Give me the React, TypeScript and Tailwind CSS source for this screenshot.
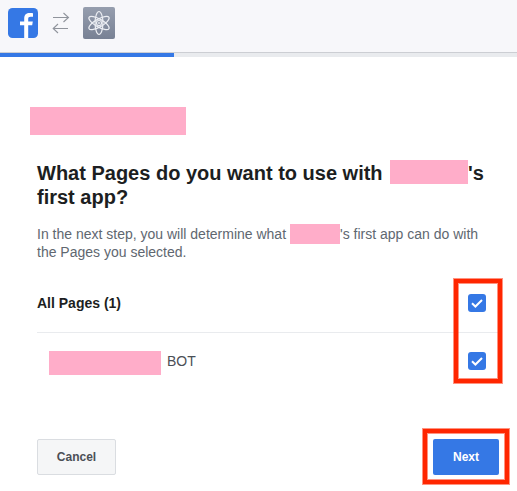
import React from "react";

function FacebookLogo() {
  return (
    <svg width="30" height="30" viewBox="0 0 30 30" className="block">
      <rect width="30" height="30" rx="4.5" fill="#3578e5" />
      <path
        fill="#fff"
        d="M16.200 30V17.300H12V13.500h4.200V10.500c0-3.800 2.200-5.500 5.600-5.500 1.300 0 2.500.1 3.200.2v3.600h-2.300c-1.900 0-2.500.8-2.500 2.300v2.400h4.600l-.6 3.800h-4V30z"
      />
    </svg>
  );
}

function Arrows() {
  return (
    <svg width="18" height="22" viewBox="0 0 18 22" fill="none" stroke="#90949c" strokeWidth="1.100" className="block">
      <path d="M1 5.500h15.400M11.500 1l5 4.500-5 4.500M16 16.500H1.500M6 12l-4.800 4.500L6 21" />
    </svg>
  );
}

function AtomIcon() {
  return (
    <svg width="32" height="32" viewBox="0 0 32 32" className="block">
      <defs>
        <linearGradient id="atomBg" x1="0" y1="0" x2="0" y2="1">
          <stop offset="0" stopColor="#969eae" />
          <stop offset="1" stopColor="#788194" />
        </linearGradient>
      </defs>
      <rect width="32" height="32" rx="2" fill="url(#atomBg)" />
      <g fill="none" stroke="#eceef3" strokeWidth="1.200">
        <ellipse cx="16" cy="16" rx="3.900" ry="11.500" />
        <ellipse cx="16" cy="16" rx="3.900" ry="11.500" transform="rotate(60 16 16)" />
        <ellipse cx="16" cy="16" rx="3.900" ry="11.500" transform="rotate(-60 16 16)" />
      </g>
      <circle cx="16" cy="16" r="2.500" fill="#8a92a3" stroke="#eceef3" strokeWidth="1.200" />
      <circle cx="16" cy="16" r="0.900" fill="#eceef3" />
    </svg>
  );
}

function Checkbox({ label }: { label: string }) {
  return (
    <span role="checkbox" aria-checked="true" aria-label={label} className="block size-[18px] rounded-[3px] bg-[#3578e5]">
      <svg width="18" height="18" viewBox="0 0 18 18" fill="none" stroke="#fff" strokeWidth="2" className="block">
        <path d="M4 9.300l3.400 3.200L14 6" />
      </svg>
    </span>
  );
}

export default function App() {
  return (
    <div className="flex h-[491px] w-[517px] flex-col overflow-hidden bg-white font-['Liberation_Sans',Arial,sans-serif] text-[#1c1e21]">
      <header className="flex h-[53px] shrink-0 items-start border-b border-[#ccced3] bg-[#f7f7fa] pl-2">
        <div className="pt-2"><FacebookLogo /></div>
        <div className="pt-3 pl-[14px]"><Arrows /></div>
        <div className="pt-[7px] pl-[13px]"><AtomIcon /></div>
      </header>
      <div className="h-1 shrink-0 bg-[#e9ebee]">
        <div className="h-full w-[174px] bg-[#3578e5]" />
      </div>

      <main className="flex flex-col pl-[37px]">
        <div className="mt-[50px] -ml-[7px] h-7 w-[156px] bg-[#ffadc9]" />
        <h1 className="mt-[26px] text-[20px] leading-6 font-bold whitespace-nowrap">
          <span className="flex h-6">
            <span className="w-[353px]">What Pages do you want to use with</span>
            <span className="-mt-px h-6 w-[78px] bg-[#ffadc9]" />
            <span>'s</span>
          </span>
          <span className="block">first app?</span>
        </h1>
        <p className="mt-4 text-[14px] leading-[18px] whitespace-nowrap text-[#606770]">
          <span className="flex h-[18px]">
            <span className="w-[253px]">In the next step, you will determine what</span>
            <span className="-mt-px h-5 w-[50px] bg-[#ffadc9]" />
            <span>'s first app can do with</span>
          </span>
          <span className="block">the Pages you selected.</span>
        </p>

        <div className="relative mt-[17px] w-[462px]">
          <div className="flex h-[55px] items-start justify-between border-b border-[#e9ebee] pt-4 pr-[13px]">
            <span className="text-[14px] leading-[18px] font-bold">All Pages (1)</span>
            <Checkbox label="All Pages" />
          </div>
          <div className="flex h-[57px] items-start pt-[18px] pr-[13px] pl-3">
            <span className="h-6 w-[112px] bg-[#ffadc9]" />
            <span className="ml-[6px] text-[14px] leading-5 text-[#4b4f56]">BOT</span>
            <span className="mt-px ml-auto"><Checkbox label="BOT" /></span>
          </div>
          <div className="absolute top-px -right-[3px] h-[104px] w-[48px] border-4 border-[#ff2600] shadow-[0_0_0_1px_#ff260080,inset_0_0_0_1px_#ff260080]" />
        </div>

        <div className="mt-[49px] flex w-[462px] justify-between text-[12px] font-bold">
          <button className="h-9 w-[79px] rounded-[2px] border border-[#dadde1] bg-[#f5f6f7] text-[#4b4f56]">Cancel</button>
          <div className="relative">
            <button className="h-9 w-[66px] rounded-[2px] bg-[#3578e5] text-white">Next</button>
            <div className="absolute -top-[10px] -left-[10px] h-[55px] w-[86px] border-4 border-[#ff2600] shadow-[0_0_0_1px_#ff260080,inset_0_0_0_1px_#ff260080]" />
          </div>
        </div>
      </main>
    </div>
  );
}
